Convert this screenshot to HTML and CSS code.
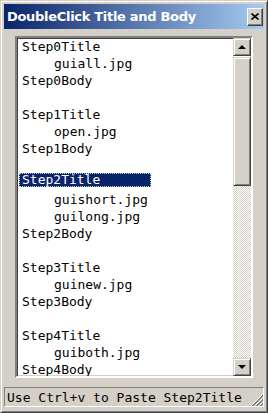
FILE: index.html
```html
<!DOCTYPE html>
<html lang="en">
  <head>
    <meta charset="UTF-8" />
    <title>DoubleClick Title and Body</title>
    <link rel="stylesheet" href="styles.css">
  </head>
  <body>
    <div class="window">
      <!-- Title bar -->
      <div class="titlebar">
        <span class="title">DoubleClick Title and Body</span>
        <div class="close-btn">
          <svg width="8" height="7" viewBox="0 0 8 7">
            <path d="M0.5 0.5 L7.5 6.5 M7.5 0.5 L0.5 6.5" stroke="#000" stroke-width="1.6" fill="none" />
          </svg>
        </div>
      </div>

      <!-- List with scrollbar -->
      <div class="content">
        <div class="listbox">
          <div class="list">
            <div class="row">Step0Title</div>
            <div class="row indent">guiall.jpg</div>
            <div class="row">Step0Body</div>
            <div class="row"></div>
            <div class="row">Step1Title</div>
            <div class="row indent">open.jpg</div>
            <div class="row">Step1Body</div>
            <div class="row"></div>
            <div class="row"><span class="selected">Step2Title</span></div>
            <div class="row indent">guishort.jpg</div>
            <div class="row indent">guilong.jpg</div>
            <div class="row">Step2Body</div>
            <div class="row"></div>
            <div class="row">Step3Title</div>
            <div class="row indent">guinew.jpg</div>
            <div class="row">Step3Body</div>
            <div class="row"></div>
            <div class="row">Step4Title</div>
            <div class="row indent">guiboth.jpg</div>
            <div class="row">Step4Body</div>
          </div>
          <div class="scrollbar">
            <div class="sb-btn"><span class="arrow-up"></span></div>
            <div class="sb-thumb"></div>
            <div class="sb-track"></div>
            <div class="sb-btn"><span class="arrow-down"></span></div>
          </div>
        </div>
      </div>

      <!-- Status bar -->
      <div class="statusbar">
        <span class="status-text">Use Ctrl+v to Paste Step2Title</span>
        <svg class="grip" width="12" height="12" viewBox="0 0 12 12">
          <path d="M11 1 L1 11 M11 5 L5 11 M11 9 L9 11" stroke="#fff" stroke-width="1" fill="none" />
          <path d="M12 1 L1 12 M12 2 L2 12 M12 5 L5 12 M12 6 L6 12 M12 9 L9 12 M12 10 L10 12" stroke="#808080" stroke-width="1" fill="none" />
        </svg>
      </div>
    </div>
  </body>
</html>
```

FILE: styles.css
```css
body {
  margin: 0;
  padding: 0;
  background-color: #d4d0c8;
}

/* Outer window with classic raised edge */
.window {
  width: 268px;
  height: 413px;
  box-sizing: border-box;
  padding: 2px;
  background-color: #d4d0c8;
  border: 1px solid;
  border-color: #d4d0c8 #404040 #404040 #d4d0c8;
  box-shadow: inset 1px 1px #fff, inset -1px -1px #808080;
  display: flex;
  flex-direction: column;
}

.titlebar {
  height: 25px;
  margin: 1px;
  margin-bottom: 0;
  background: linear-gradient(to right, #0a246a, #a6caf0);
  display: flex;
  align-items: center;
  justify-content: space-between;
  padding: 0 1px 0 3px;
}

.title {
  color: #fff;
  font-family: 'DejaVu Sans', sans-serif;
  font-weight: bold;
  font-size: 13px;
  letter-spacing: -0.3px;
}

.close-btn {
  width: 14px;
  height: 16px;
  background-color: #d4d0c8;
  border: 1px solid;
  border-color: #fff #404040 #404040 #fff;
  box-shadow: inset -1px -1px #808080;
  display: flex;
  justify-content: center;
  align-items: center;
}

.content {
  padding: 7px 12px 0 12px;
}

/* Sunken list box */
.listbox {
  height: 338px;
  border: 2px solid;
  border-color: #808080 #fff #fff #808080;
  box-shadow: inset 1px 1px #404040, inset -1px -1px #d4d0c8;
  background-color: #fff;
  display: flex;
}

.list {
  flex: 1;
  padding: 0 0 0 5px;
  overflow: hidden;
  font-family: 'DejaVu Sans Mono', monospace;
  font-size: 13px;
  color: #000;
}

.row {
  height: 17px;
  line-height: 17px;
  white-space: pre;
}

.indent {
  padding-left: 32px;
}

.selected {
  display: inline-block;
  width: 128px;
  height: 12px;
  line-height: 12px;
  margin-left: -3px;
  padding: 0 0 0 2px;
  margin-top: -1px;
  vertical-align: top;
  background-color: #0a246a;
  color: #fff;
  border: 1px dotted #d4d0c8;
}

/* Scrollbar */
.scrollbar {
  width: 18px;
  display: flex;
  flex-direction: column;
}

.sb-btn,
.sb-thumb {
  box-sizing: border-box;
  background-color: #d4d0c8;
  border: 1px solid;
  border-color: #d4d0c8 #404040 #404040 #d4d0c8;
  box-shadow: inset 1px 1px #fff, inset -1px -1px #808080;
}

.sb-btn {
  height: 18px;
  display: flex;
  justify-content: center;
  align-items: center;
}

.sb-thumb {
  height: 129px;
  margin-top: 1px;
}

.sb-track {
  flex: 1;
  background-color: #fff;
  background-image: conic-gradient(#d4d0c8 25%, #fff 0 50%, #d4d0c8 0 75%, #fff 0);
  background-size: 2px 2px;
}

.arrow-up,
.arrow-down {
  width: 0;
  height: 0;
  border-left: 4px solid transparent;
  border-right: 4px solid transparent;
}

.arrow-up {
  border-bottom: 4px solid #000;
}

.arrow-down {
  border-top: 4px solid #000;
}

/* Status bar */
.statusbar {
  margin: 9px 1px 0 1px;
  height: 20px;
  box-sizing: border-box;
  border: 1px solid;
  border-color: #808080 #fff #fff #808080;
  display: flex;
  align-items: center;
  justify-content: space-between;
  padding-left: 2px;
}

.status-text {
  font-family: 'DejaVu Sans Mono', monospace;
  font-size: 13px;
  color: #000;
}

.grip {
  align-self: flex-end;
}
```
